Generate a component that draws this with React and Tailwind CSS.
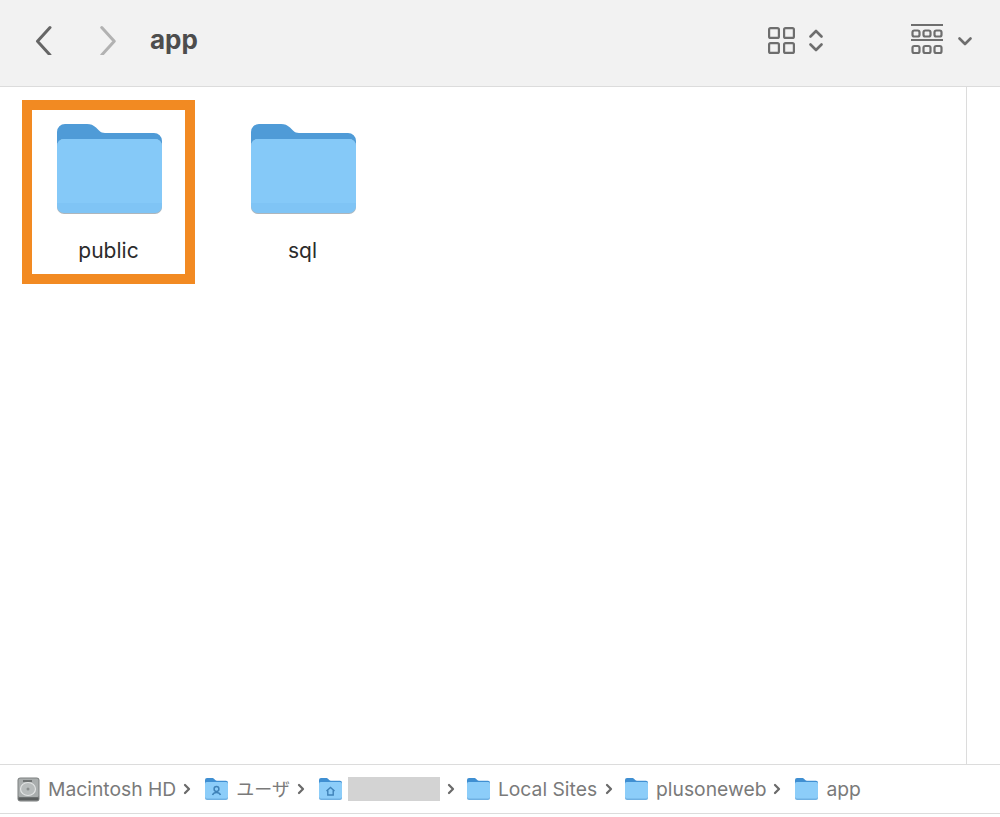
import React from 'react';

const Chevron = ({ d, color = '#666', width = 2.6, box = '0 0 24 24', className }) => (
    <svg className={className} viewBox={box} fill="none" stroke={color} strokeWidth={width} strokeLinecap="round" strokeLinejoin="round">
        <path d={d} />
    </svg>
);

const ViewIcon = () => (
    <svg className="w-[27px] h-[27px]" viewBox="0 0 27 27" fill="none" stroke="#6e6e6e" strokeWidth="2.200">
        <rect x="1.100" y="1.100" width="9.800" height="9.800" rx="1.500" />
        <rect x="16.100" y="1.100" width="9.800" height="9.800" rx="1.500" />
        <rect x="1.100" y="16.100" width="9.800" height="9.800" rx="1.500" />
        <rect x="16.100" y="16.100" width="9.800" height="9.800" rx="1.500" />
    </svg>
);

const GroupIcon = () => {
    const cells = [1.500, 12.500, 23.500];
    return (
        <svg className="w-[32px] h-[32px]" viewBox="0 0 32 32" fill="none" stroke="#6e6e6e" strokeWidth="2.200">
            <path d="M0 1h32M0 16h32" strokeWidth="2.200" />
            {cells.map((x) => (
                <rect key={`a${x}`} x={x} y="6.500" width="7" height="6" rx="1.800" />
            ))}
            {cells.map((x) => (
                <rect key={`b${x}`} x={x} y="22" width="7" height="7" rx="1.800" />
            ))}
        </svg>
    );
};

const BigFolder = () => (
    <svg className="w-[105px] h-[90px] block" viewBox="0 0 105 90">
        <path d="M0 8a8 8 0 0 1 8-8h22c4 0 6 1 9 3.500l3 3c2 1.800 3.500 2.500 6 2.500h49a8 8 0 0 1 8 8v20H0z" fill="#4f9bd7" />
        <rect x="0" y="15" width="105" height="75" rx="7" fill="#aeb6bc" />
        <rect x="0" y="15" width="105" height="74" rx="7" fill="#7fc4f5" />
        <path d="M0 22a7 7 0 0 1 7-7h91a7 7 0 0 1 7 7v57H0z" fill="#85c9f8" />
    </svg>
);

const SmallFolder = ({ badge }) => (
    <svg className="w-[23px] h-[22px] shrink-0" viewBox="0 0 23 22">
        <path d="M0 2a2 2 0 0 1 2-2h5c1 0 1.500.3 2.200 1l1 1c.5.5 1 .7 1.800.7h9a2 2 0 0 1 2 2v5H0z" fill="#3f8fd2" />
        <rect x="0" y="4" width="23" height="18" rx="2" fill="#6fb0e2" />
        <rect x="0" y="4" width="23" height="16.500" rx="2" fill="#8ccdf9" />
        {badge === 'user' && <circle cx="11.500" cy="11" r="2.400" fill="none" stroke="#3f82b8" strokeWidth="1.500" />}
        {badge === 'user' && <path d="M7.500 17c.8-2 2.200-2.500 4-2.500s3.200.5 4 2.500" fill="none" stroke="#3f82b8" strokeWidth="1.500" />}
        {badge === 'home' && <path d="M7.500 13l4-3.500 4 3.500M8.800 12.500V17h5.400v-4.500" fill="none" stroke="#3f82b8" strokeWidth="1.400" />}
    </svg>
);

const DiskIcon = () => (
    <svg className="w-[23px] h-[25px] shrink-0" viewBox="0 0 23 25">
        <rect x="0.500" y="0.500" width="22" height="24" rx="3" fill="#7d8080" />
        <rect x="1.500" y="1.500" width="20" height="18.500" rx="1.500" fill="#a9adad" />
        <rect x="1.500" y="20.500" width="20" height="2.500" rx="1" fill="#5b5e5e" />
        <ellipse cx="11" cy="12" rx="7.500" ry="6.500" fill="#b8bcbc" stroke="#e2e4e4" strokeWidth="1.200" />
        <circle cx="11" cy="12" r="1.500" fill="#8a8e8e" />
        <path d="M6 4h9" stroke="#5d6060" strokeWidth="1.500" />
    </svg>
);

const Sep = ({ className }) => (
    <Chevron className={`w-[12px] h-[12px] shrink-0 ${className}`} d="M8 4l8 8-8 8" color="#6a6a6a" width={4.500} />
);

const Item = ({ label, selected }) => (
    <div className={`w-[173px] h-[184px] flex flex-col items-center border-[10px] ${selected ? 'border-[#f28a22]' : 'border-transparent'}`}>
        <div className="mt-[14px] ml-[2px]"><BigFolder /></div>
        <span className="mt-[23px] text-[21px] leading-[28px] text-[#2b2b2b]">{label}</span>
    </div>
);

export default function App() {
    return (
        <div className="w-[1000px] h-[817px] flex flex-col bg-white overflow-hidden font-['Inter','Noto_Sans_CJK_JP',sans-serif]">
            <header className="h-[87px] shrink-0 flex items-center bg-[#f2f2f2] border-b border-[#dcdcdc] pb-[6px]">
                <Chevron className="w-[30px] h-[30px] ml-[30px]" d="M16 2L6 13l10 11" width={2.400} />
                <Chevron className="w-[30px] h-[30px] ml-[33px]" d="M7 2l10 11L7 24" color="#b2b2b2" width={2.400} />
                <h1 className="ml-[27px] text-[26px] font-bold text-[#4d4d4d] leading-none">app</h1>
                <div className="ml-auto flex items-center">
                    <ViewIcon />
                    <div className="ml-[14px] flex flex-col gap-[5px]">
                        <Chevron className="w-[14px] h-[9px]" box="0 0 14 9" d="M1.500 7.500L7 2l5.500 5.500" color="#6e6e6e" width={2.600} />
                        <Chevron className="w-[14px] h-[9px]" box="0 0 14 9" d="M1.500 1.500L7 7l5.500-5.500" color="#6e6e6e" width={2.600} />
                    </div>
                    <div className="ml-[88px]"><GroupIcon /></div>
                    <Chevron className="w-[14px] h-[9px] ml-[15px] mr-[28px] mt-[2px]" box="0 0 14 9" d="M1.500 1.500L7 7l5.500-5.500" color="#6e6e6e" width={2.600} />
                </div>
            </header>

            <main className="flex-1 flex">
                <div className="flex-1 flex items-start gap-[21px] pl-[22px] pt-[13px]">
                    <Item label="public" selected />
                    <Item label="sql" />
                </div>
                <div className="w-[34px] border-l border-[#dcdcdc]" />
            </main>

            <footer className="h-[50px] shrink-0 mb-[3px] flex items-center pl-[17px] border-y border-[#dcdcdc] text-[19.3px] text-[#7a7a7a]">
                <DiskIcon />
                <span className="ml-[8px]">Macintosh HD</span>
                <Sep className="ml-[5px]" />
                <div className="ml-[12px]"><SmallFolder badge="user" /></div>
                <span className="ml-[8px] text-[18px]">ユーザ</span>
                <Sep className="ml-[5px]" />
                <div className="ml-[12px]"><SmallFolder badge="home" /></div>
                <div className="ml-[6px] w-[92px] h-[24px] bg-[#d3d3d3]" />
                <Sep className="ml-[5px]" />
                <div className="ml-[10px]"><SmallFolder /></div>
                <span className="ml-[8px]">Local Sites</span>
                <Sep className="ml-[6px]" />
                <div className="ml-[10px]"><SmallFolder /></div>
                <span className="ml-[8px]">plusoneweb</span>
                <Sep className="ml-[5px]" />
                <div className="ml-[12px]"><SmallFolder /></div>
                <span className="ml-[8px]">app</span>
            </footer>
        </div>
    );
}
